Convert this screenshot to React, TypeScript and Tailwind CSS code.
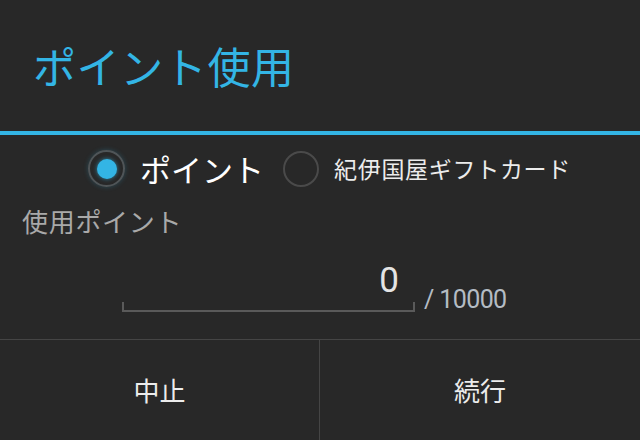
import React from "react";

const jp = "font-['Noto_Sans_CJK_JP','Noto_Sans',sans-serif]";

export default function App() {
  return (
    <div className={`w-[640px] h-[440px] bg-[#282828] flex flex-col ${jp}`}>
      <div className="h-[131px] flex items-center pl-[33px]">
        <span className="text-[43px] leading-none tracking-[0.6px] text-[#33b5e5]">ポイント使用</span>
      </div>
      <div className="h-[4px] bg-[#33b5e5]" />

      <div className="flex items-center pl-[88px] pt-[15px] h-[52px]">
        <div className="w-[37px] h-[37px] rounded-full border-2 border-[#4f5558] flex items-center justify-center shadow-[0_0_5px_rgba(51,181,229,0.25)]">
          <div className="w-[20px] h-[20px] rounded-full bg-[#33b5e5] shadow-[0_0_4px_rgba(51,181,229,0.7)]" />
        </div>
        <span className="ml-[15px] text-[31px] leading-none text-white">ポイント</span>
        <div className="ml-[19px] w-[36px] h-[36px] rounded-full border-2 border-[#4a4a4a]" />
        <span className="ml-[15px] text-[23px] leading-none tracking-[0.7px] text-[#ececec]">紀伊国屋ギフトカード</span>
      </div>

      <div className="mt-[21px] pl-[22px] text-[26px] leading-none tracking-[0.7px] text-[#a9a9a9]">使用ポイント</div>

      <div className="mt-[29px] flex items-end pl-[122px]">
        <div className="w-[293px] flex flex-col">
          <div className="text-right pr-[16px] text-[35px] leading-none text-[#e4e4e4] font-['Roboto',sans-serif]">0</div>
          <div className="mt-[4px] h-[10px] border-2 border-t-0 border-[#5a5a5a]" />
        </div>
        <div className="ml-[9px] text-[25px] leading-none tracking-[-0.6px] text-[#b4bcc4] font-['Roboto',sans-serif]">
          / 10000
        </div>
      </div>

      <div className="mt-auto h-[101px] border-t border-[#454545] grid grid-cols-[320px_1fr]">
        <div className="border-r border-[#454545] flex items-center justify-center text-[26px] leading-none text-[#ececec]">中止</div>
        <div className="flex items-center justify-center text-[26px] leading-none text-[#ececec]">続行</div>
      </div>
    </div>
  );
}
